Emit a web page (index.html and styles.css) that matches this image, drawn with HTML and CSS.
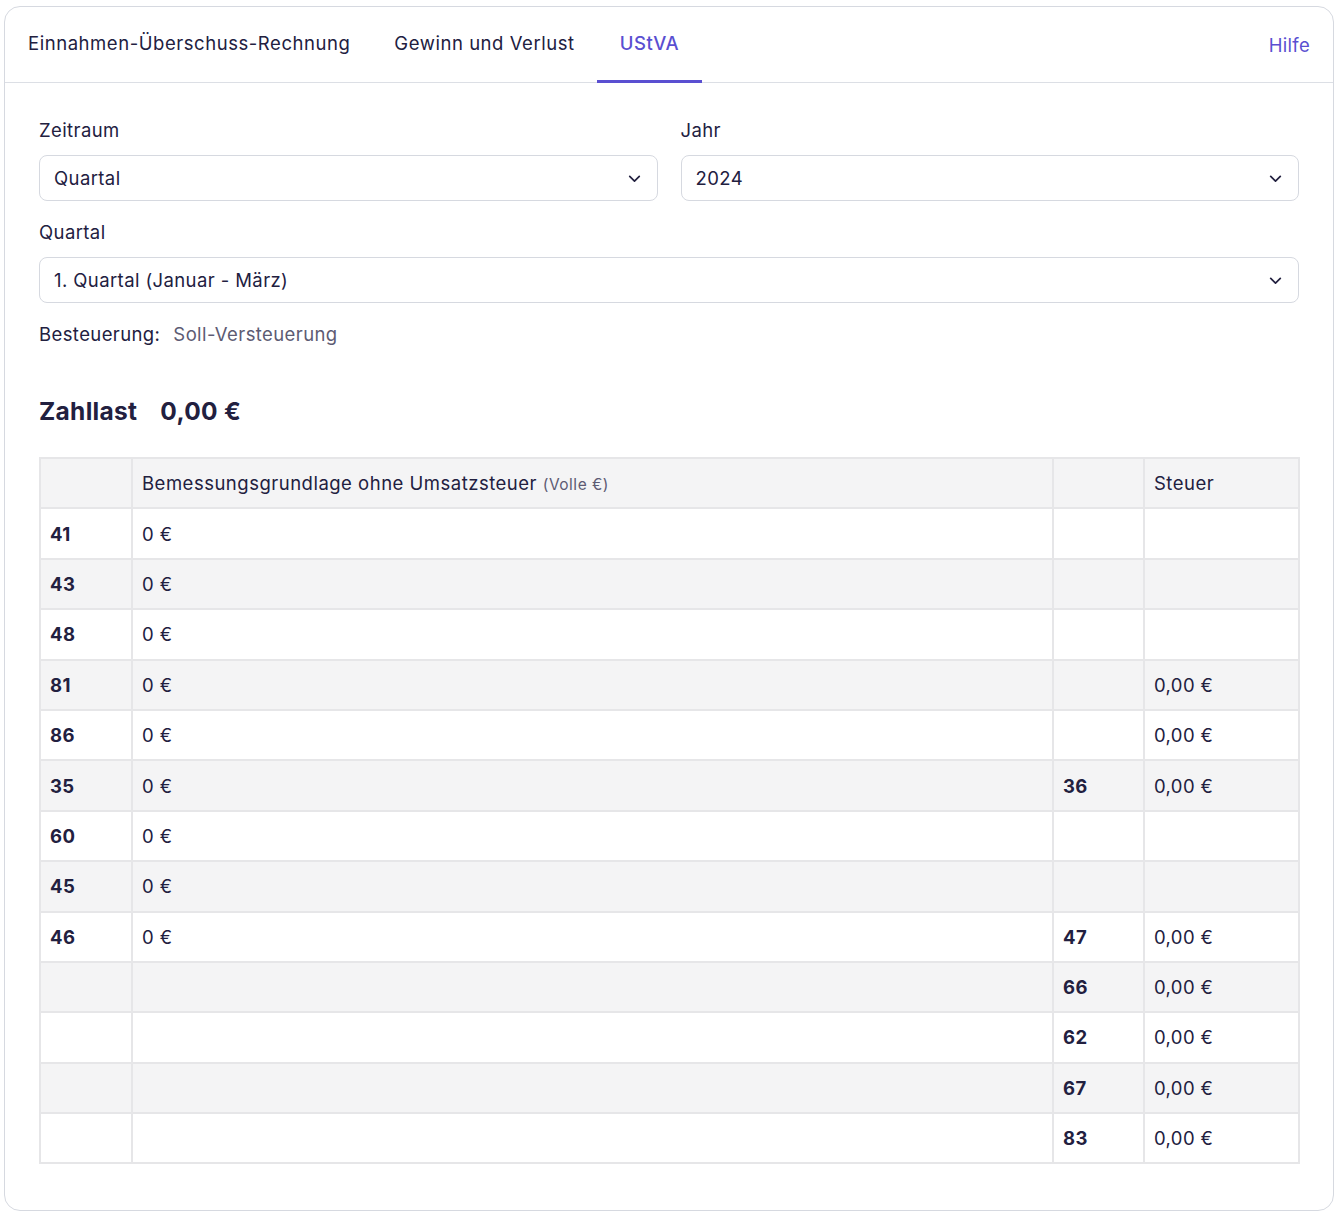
FILE: index.html
```html
<!DOCTYPE html>
<html lang="de">
<head>
<meta charset="utf-8">
<title>UStVA</title>
<link rel="stylesheet" href="styles.css">
</head>
<body>
<div class="card">
  <div class="tabs">
    <nav class="tablist">
      <a class="tab">Einnahmen-Überschuss-Rechnung</a>
      <a class="tab">Gewinn und Verlust</a>
      <a class="tab active">UStVA</a>
    </nav>
    <a class="help">Hilfe</a>
  </div>
  <div class="content">
    <div class="row2">
      <div class="field">
        <label class="label">Zeitraum</label>
        <div class="select"><span>Quartal</span><svg class="chev" viewBox="0 0 16 16"><path d="M3.5 6l4.5 4.5L12.5 6"/></svg></div>
      </div>
      <div class="field">
        <label class="label">Jahr</label>
        <div class="select"><span>2024</span><svg class="chev" viewBox="0 0 16 16"><path d="M3.5 6l4.5 4.5L12.5 6"/></svg></div>
      </div>
    </div>
    <div class="field">
      <label class="label">Quartal</label>
      <div class="select"><span>1. Quartal (Januar - März)</span><svg class="chev" viewBox="0 0 16 16"><path d="M3.5 6l4.5 4.5L12.5 6"/></svg></div>
    </div>
    <div class="taxation"><span class="tlabel">Besteuerung:</span><span class="tvalue">Soll-Versteuerung</span></div>
    <h2 class="total"><span>Zahllast</span><span>0,00 €</span></h2>
    <table class="grid">
      <colgroup><col class="c1"><col class="c2"><col class="c3"><col class="c4"></colgroup>
      <thead>
        <tr><th></th><th>Bemessungsgrundlage ohne Umsatzsteuer <small>(Volle €)</small></th><th></th><th>Steuer</th></tr>
      </thead>
      <tbody>
        <tr><td class="k">41</td><td>0 €</td><td></td><td></td></tr>
        <tr><td class="k">43</td><td>0 €</td><td></td><td></td></tr>
        <tr><td class="k">48</td><td>0 €</td><td></td><td></td></tr>
        <tr><td class="k">81</td><td>0 €</td><td></td><td>0,00 €</td></tr>
        <tr><td class="k">86</td><td>0 €</td><td></td><td>0,00 €</td></tr>
        <tr><td class="k">35</td><td>0 €</td><td class="k">36</td><td>0,00 €</td></tr>
        <tr><td class="k">60</td><td>0 €</td><td></td><td></td></tr>
        <tr><td class="k">45</td><td>0 €</td><td></td><td></td></tr>
        <tr><td class="k">46</td><td>0 €</td><td class="k">47</td><td>0,00 €</td></tr>
        <tr><td></td><td></td><td class="k">66</td><td>0,00 €</td></tr>
        <tr><td></td><td></td><td class="k">62</td><td>0,00 €</td></tr>
        <tr><td></td><td></td><td class="k">67</td><td>0,00 €</td></tr>
        <tr><td></td><td></td><td class="k">83</td><td>0,00 €</td></tr>
      </tbody>
    </table>
  </div>
</div>
</body>
</html>
```

FILE: styles.css
```css
* { box-sizing: border-box; }
html, body { margin: 0; padding: 0; background: #ffffff; }
body {
  font-family: Inter, "Noto Sans", "Liberation Sans", sans-serif;
  color: #22203f;
  padding: 6px 4px 0 4px;
  letter-spacing: 0.4px;
}
.card {
  width: 1330px;
  height: 1205px;
  border: 1px solid #d6d9e0;
  border-radius: 16px;
  background: #fff;
}
.tabs {
  display: flex;
  align-items: stretch;
  justify-content: space-between;
  height: 76px;
  border-bottom: 1px solid #dcdfe5;
  padding: 0 23px 0 23px;
}
.tablist { display: flex; gap: 0; }
.tab {
  display: flex;
  align-items: center;
  padding: 0 22px 2px 0;
  margin-right: 22px;
  font-size: 18.5px;
  letter-spacing: 0.55px;
  color: #22203f;
  border-bottom: 3px solid transparent;
  margin-bottom: -1px;
}
.tab.active {
  color: #5a4fd1;
  font-weight: 500;
  border-bottom-color: #5a4fd1;
  padding: 0 23px 2px 23px;
  margin-left: -22px;
}
.help {
  display: flex;
  align-items: center;
  font-size: 18.5px;
  color: #5a4fd1;
  letter-spacing: 0.3px;
}
.content { padding: 36px 34px 0 34px; }
.row2 { display: grid; grid-template-columns: 1fr 1fr; gap: 23px; }
.field { display: flex; flex-direction: column; margin-bottom: 20px; }
.label { font-size: 18.5px; line-height: 22px; margin-bottom: 14px; }
.select {
  height: 46px;
  border: 1px solid #d6d9e0;
  border-radius: 8px;
  display: flex;
  align-items: center;
  justify-content: space-between;
  padding: 0 14px 0 14px;
  font-size: 18.5px;
}
.chev { width: 17px; height: 17px; fill: none; stroke: #22203f; stroke-width: 1.6; stroke-linecap: round; stroke-linejoin: round; }
.taxation { font-size: 18.5px; margin-top: 8px; line-height: 22px; }
.tlabel { margin-right: 13px; }
.tvalue { color: #5d5b73; }
.total {
  margin: 51px 0 0 0;
  font-size: 24.5px;
  font-weight: 700;
  line-height: 30px;
  letter-spacing: 0.3px;
  display: flex;
  gap: 23px;
}
.grid {
  margin-top: 31px;
  width: 1259px;
  border-collapse: collapse;
  font-size: 18.5px;
  table-layout: fixed;
}
.c1 { width: 92px; }
.c2 { width: 921px; }
.c3 { width: 91px; }
.c4 { width: 155px; }
.grid th, .grid td {
  border: 2px solid #e6e6e8;
  height: 50.4px;
  padding: 0 9px;
  text-align: left;
  font-weight: 400;
}
.grid th { letter-spacing: 0.5px; }
.grid thead th { background: #f4f4f5; }
.grid tbody tr:nth-child(even) td { background: #f4f4f5; }
.grid small { font-size: 15.5px; color: #5d5b73; }
.grid td.k { font-weight: 700; }
```
